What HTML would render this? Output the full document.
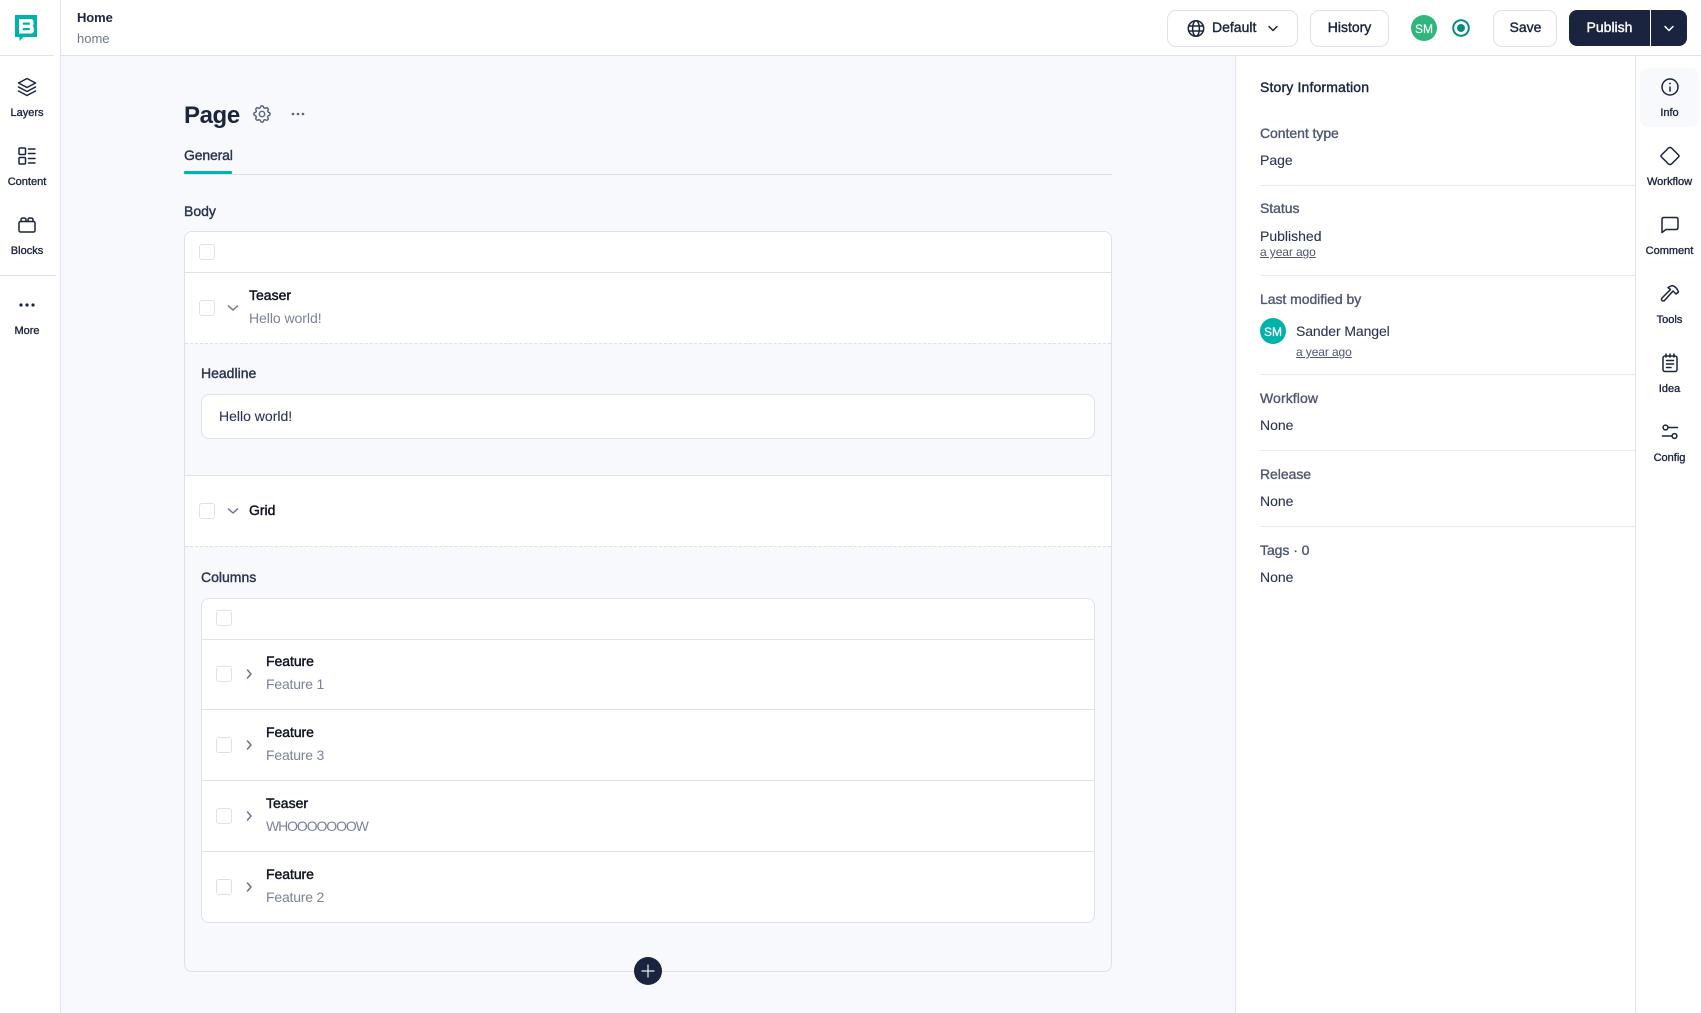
<!DOCTYPE html>
<html lang="en">
<head>
<meta charset="utf-8">
<title>Page</title>
<style>
html,body{margin:0;padding:0;width:1701px;height:1013px;overflow:hidden;background:#fff;font-family:"Liberation Sans",Arial,sans-serif;color:#1b243f}
.a{position:absolute;box-sizing:border-box}
.t{position:absolute;line-height:20px;white-space:nowrap;font-size:14px}
.m{-webkit-text-stroke:.4px currentColor}
.c{transform:translateX(-50%)}
.rl{font-size:11px;color:#1b243f;-webkit-text-stroke:.35px currentColor}
.lab{color:#4f5672;-webkit-text-stroke:.35px currentColor;letter-spacing:-.05px}
.val{color:#2b3350;-webkit-text-stroke:.1px currentColor}
.sub{color:#7c829c;letter-spacing:-.05px}
.nm{color:#0c1020;-webkit-text-stroke:.4px currentColor}
.small{font-size:12px;color:#4f5672;text-decoration:underline;letter-spacing:-.1px}
.cb{position:absolute;width:16px;height:16px;border:1px solid #dfe1ea;border-radius:3px;background:#fff;box-sizing:border-box}
.hl{position:absolute;height:1px;background:#dfe1ea}
.btn{position:absolute;top:10px;height:37px;border:1px solid #dfe1ea;border-radius:9px;background:#fff;box-sizing:border-box}
svg{position:absolute;left:0;top:0}
</style>
</head>
<body>
<!-- frames -->
<div class="a" style="left:60px;top:55px;width:1176px;height:958px;background:#f8f9fd"></div>
<div class="a" style="left:60px;top:0;width:1px;height:1013px;background:#dfe3ee"></div>
<div class="a" style="left:0;top:55px;width:54px;height:1px;background:#dfe1ea"></div>
<div class="a" style="left:60px;top:55px;width:1641px;height:1px;background:#dfe1ea"></div>
<div class="a" style="left:0;top:275px;width:56px;height:1px;background:#dfe1ea"></div>
<div class="a" style="left:1235px;top:56px;width:1px;height:957px;background:#dfe3ee"></div>
<div class="a" style="left:1635px;top:56px;width:1px;height:957px;background:#dfe3ee"></div>
<div class="a" style="left:1640px;top:68px;width:59px;height:59px;background:#f8f9fd;border-radius:8px"></div>

<!-- top bar text -->
<div class="t" style="left:77px;top:8px;font-size:13px;font-weight:bold;color:#1b243f;letter-spacing:-.1px">Home</div>
<div class="t" style="left:77px;top:28.5px;font-size:13px;color:#6f7590">home</div>

<!-- top buttons -->
<div class="btn" style="left:1167px;width:131px"></div>
<div class="t m" style="left:1212px;top:17px;color:#1b243f">Default</div>
<div class="btn" style="left:1310px;width:79px"></div>
<div class="t m c" style="left:1349.5px;top:17px;color:#1b243f">History</div>
<div class="a" style="left:1411px;top:15px;width:26px;height:26px;border-radius:50%;background:#2fb67c"></div>
<div class="t c" style="left:1424px;top:19px;font-size:12px;color:#fff;-webkit-text-stroke:.15px #fff">SM</div>
<div class="btn" style="left:1493px;width:64px"></div>
<div class="t m c" style="left:1525.5px;top:17px;color:#1b243f">Save</div>
<div class="a" style="left:1569px;top:10px;width:118px;height:36px;border-radius:8px;background:#1b243f"></div>
<div class="a" style="left:1650px;top:10px;width:1px;height:36px;background:#fff"></div>
<div class="t m c" style="left:1609.5px;top:17px;color:#fff">Publish</div>

<!-- left rail labels -->
<div class="t rl c" style="left:27px;top:102.5px">Layers</div>
<div class="t rl c" style="left:27px;top:171.5px">Content</div>
<div class="t rl c" style="left:27px;top:240.5px">Blocks</div>
<div class="t rl c" style="left:27px;top:320.5px">More</div>

<!-- right rail labels -->
<div class="t rl c" style="left:1669.5px;top:102.5px">Info</div>
<div class="t rl c" style="left:1669.5px;top:171.5px">Workflow</div>
<div class="t rl c" style="left:1669.5px;top:240.5px">Comment</div>
<div class="t rl c" style="left:1669.5px;top:309.5px">Tools</div>
<div class="t rl c" style="left:1669.5px;top:378.5px">Idea</div>
<div class="t rl c" style="left:1669.5px;top:447.5px">Config</div>

<!-- heading -->
<div class="t" style="left:184px;top:106px;font-size:24px;font-weight:bold;color:#1b243f;letter-spacing:-.4px">Page</div>
<div class="t m" style="left:184px;top:145px;color:#2b3350;letter-spacing:-.15px">General</div>
<div class="hl" style="left:184px;top:174px;width:928px"></div>
<div class="a" style="left:184px;top:171px;width:48px;height:3px;background:#00b3b0;border-radius:1px"></div>
<div class="t m" style="left:184px;top:201px;color:#2b3350">Body</div>

<!-- outer box -->
<div class="a" style="left:184px;top:231px;width:928px;height:741px;border:1px solid #dfe1ea;border-radius:8px;background:#f8f9fd"></div>
<div class="a" style="left:185px;top:232px;width:926px;height:111px;background:#fff;border-radius:7px 7px 0 0"></div>
<div class="a" style="left:185px;top:476px;width:926px;height:70px;background:#fff"></div>
<div class="hl" style="left:185px;top:272px;width:926px"></div>
<div class="a" style="left:185px;top:343px;width:926px;height:0;border-top:1px dashed #dfe1ea"></div>
<div class="hl" style="left:185px;top:475px;width:926px"></div>
<div class="a" style="left:185px;top:546px;width:926px;height:0;border-top:1px dashed #dfe1ea"></div>

<div class="cb" style="left:199px;top:244px"></div>
<div class="cb" style="left:199px;top:300px"></div>
<div class="t nm" style="left:249px;top:285px">Teaser</div>
<div class="t sub" style="left:249px;top:308px">Hello world!</div>

<div class="t m" style="left:201px;top:363px;color:#2b3350">Headline</div>
<div class="a" style="left:201px;top:394px;width:894px;height:45px;border:1px solid #dfe1ea;border-radius:8px;background:#fff"></div>
<div class="t" style="left:219px;top:405.5px;color:#2b3350;-webkit-text-stroke:.1px currentColor">Hello world!</div>

<div class="cb" style="left:199px;top:503px"></div>
<div class="t nm" style="left:249px;top:500px">Grid</div>

<div class="t m" style="left:201px;top:567px;color:#2b3350">Columns</div>

<!-- inner box -->
<div class="a" style="left:201px;top:598px;width:894px;height:325px;border:1px solid #dfe1ea;border-radius:8px;background:#fff"></div>
<div class="hl" style="left:202px;top:639px;width:892px"></div>
<div class="hl" style="left:202px;top:709px;width:892px"></div>
<div class="hl" style="left:202px;top:780px;width:892px"></div>
<div class="hl" style="left:202px;top:851px;width:892px"></div>
<div class="cb" style="left:216px;top:610px"></div>
<div class="cb" style="left:216px;top:666px"></div>
<div class="cb" style="left:216px;top:737px"></div>
<div class="cb" style="left:216px;top:808px"></div>
<div class="cb" style="left:216px;top:879px"></div>
<div class="t nm" style="left:266px;top:651px;letter-spacing:-.05px">Feature</div>
<div class="t sub" style="left:266px;top:674px;letter-spacing:-.2px">Feature 1</div>
<div class="t nm" style="left:266px;top:722px;letter-spacing:-.05px">Feature</div>
<div class="t sub" style="left:266px;top:745px;letter-spacing:-.2px">Feature 3</div>
<div class="t nm" style="left:266px;top:793px">Teaser</div>
<div class="t sub" style="left:266px;top:816px;letter-spacing:-1.1px">WHOOOOOOOW</div>
<div class="t nm" style="left:266px;top:864px;letter-spacing:-.05px">Feature</div>
<div class="t sub" style="left:266px;top:887px;letter-spacing:-.2px">Feature 2</div>

<!-- right panel -->
<div class="t m" style="left:1260px;top:77px;color:#1b243f;letter-spacing:.15px">Story Information</div>
<div class="t lab" style="left:1260px;top:123px">Content type</div>
<div class="t val" style="left:1260px;top:150px">Page</div>
<div class="hl" style="left:1260px;top:185px;width:375px;background:#e9eaf0"></div>
<div class="t lab" style="left:1260px;top:198px">Status</div>
<div class="t val" style="left:1260px;top:225.5px">Published</div>
<div class="t small" style="left:1260px;top:242px">a year ago</div>
<div class="hl" style="left:1260px;top:275px;width:375px;background:#e9eaf0"></div>
<div class="t lab" style="left:1260px;top:289px">Last modified by</div>
<div class="a" style="left:1260px;top:318px;width:26px;height:26px;border-radius:50%;background:#00b3aa"></div>
<div class="t c" style="left:1273px;top:321.5px;font-size:12px;color:#fff;-webkit-text-stroke:.25px #fff">SM</div>
<div class="t val" style="left:1296px;top:321px;letter-spacing:-.1px">Sander Mangel</div>
<div class="t small" style="left:1296px;top:342px">a year ago</div>
<div class="hl" style="left:1260px;top:374px;width:375px;background:#e9eaf0"></div>
<div class="t lab" style="left:1260px;top:388px;letter-spacing:.1px">Workflow</div>
<div class="t val" style="left:1260px;top:415px">None</div>
<div class="hl" style="left:1260px;top:450px;width:375px;background:#e9eaf0"></div>
<div class="t lab" style="left:1260px;top:464px">Release</div>
<div class="t val" style="left:1260px;top:491px">None</div>
<div class="hl" style="left:1260px;top:526px;width:375px;background:#e9eaf0"></div>
<div class="t lab" style="left:1260px;top:540px">Tags · 0</div>
<div class="t val" style="left:1260px;top:567px">None</div>

<!-- icons -->
<svg width="1701" height="1013" viewBox="0 0 1701 1013" fill="none" stroke="#1b243f" stroke-width="1.5" stroke-linecap="round" stroke-linejoin="round">
  <!-- logo -->
  <path d="M15 15H37V37H23.5L19.5 41V37H15Z" fill="#00b3aa" stroke="none"/>
  <path d="M19 19H30.5Q33.5 19 33.5 22V24.5Q33.5 25.8 32.5 26.2Q33.8 26.8 33.8 28V30.5Q33.8 33.5 30.8 33.5H19ZM22.8 22.5V24.8H29.8V22.5ZM22.8 28V30.2H29.8V28Z" fill="#fff" stroke="none" fill-rule="evenodd"/>

  <!-- left rail -->
  <path d="M27 78.5L35.5 83 27 87.5 18.5 83Z"/>
  <path d="M18.5 87L27 91.5 35.5 87"/>
  <path d="M18.5 91L27 95.5 35.5 91"/>
  <rect x="19" y="148" width="6.5" height="6.5" rx="1"/>
  <rect x="19" y="157.5" width="6.5" height="6.5" rx="1"/>
  <path d="M28.5 149H35M28.5 153.5H35M28.5 158.5H35M28.5 163H35"/>
  <rect x="19" y="221.5" width="16" height="10.5" rx="1.5"/>
  <path d="M21 221.5V220Q21 218 23 218H24Q26 218 26 220V221.5M28 221.5V220Q28 218 30 218H31Q33 218 33 220V221.5"/>
  <g fill="#1b243f" stroke="none"><circle cx="21" cy="305" r="1.6"/><circle cx="27" cy="305" r="1.6"/><circle cx="33" cy="305" r="1.6"/></g>

  <!-- gear -->
  <g transform="translate(251.2 103.2) scale(.9)" stroke="#5b6180" stroke-width="1.6">
    <path d="M10.325 4.317c.426-1.756 2.924-1.756 3.35 0a1.724 1.724 0 0 0 2.573 1.066c1.543-.94 3.31.826 2.37 2.37a1.724 1.724 0 0 0 1.065 2.572c1.756.426 1.756 2.924 0 3.35a1.724 1.724 0 0 0-1.066 2.573c.94 1.543-.826 3.31-2.37 2.37a1.724 1.724 0 0 0-2.572 1.065c-.426 1.756-2.924 1.756-3.35 0a1.724 1.724 0 0 0-2.573-1.066c-1.543.94-3.31-.826-2.37-2.37a1.724 1.724 0 0 0-1.065-2.572c-1.756-.426-1.756-2.924 0-3.35a1.724 1.724 0 0 0 1.066-2.573c-.94-1.543.826-3.31 2.37-2.37c1 .608 2.296.07 2.572-1.065z"/>
    <circle cx="12" cy="12" r="3"/>
  </g>
  <g fill="#5b6180" stroke="none"><circle cx="293" cy="114" r="1.3"/><circle cx="298" cy="114" r="1.3"/><circle cx="303" cy="114" r="1.3"/></g>

  <!-- globe -->
  <circle cx="1196" cy="28.5" r="7.7"/>
  <ellipse cx="1196" cy="28.5" rx="3.4" ry="7.7"/>
  <path d="M1188.8 26H1203.2M1188.8 31H1203.2"/>
  <path d="M1269 26.5L1273 30.5 1277 26.5"/>
  <circle cx="1461" cy="28" r="7.8" stroke="#0a8a80" stroke-width="2"/>
  <circle cx="1461" cy="28" r="4" fill="#0a8a80" stroke="none"/>
  <path d="M1665 26.5L1669 30.5 1673 26.5" stroke="#fff"/>

  <!-- right rail -->
  <circle cx="1670" cy="87" r="8"/>
  <path d="M1670 87V91"/>
  <circle cx="1670" cy="83.5" r=".9" fill="#1b243f" stroke="none"/>
  <path d="M1668.5 148L1661.5 155Q1660.5 156 1661.5 157L1668.5 164Q1670 165 1671.5 164L1678.5 157Q1679.5 156 1678.5 155L1671.5 148Q1670 147 1668.5 148Z"/>
  <path d="M1664 217.5H1676Q1678 217.5 1678 219.5V227.5Q1678 229.5 1676 229.5H1666L1662 232.5V219.5Q1662 217.5 1664 217.5Z"/>
  <path d="M1668 287.5L1672 285.5Q1676.5 286.5 1678.5 292L1676 294 1673 291 1664.5 300.5Q1663 301.5 1662 300.5 1661 299.5 1662 298L1670.5 289.5Z"/>
  <rect x="1663" y="356" width="14" height="15.5" rx="2"/>
  <path d="M1666 354V357M1670 354V357M1674 354V357M1666.5 360.5H1673.5M1666.5 364H1673.5M1666.5 367.5H1671"/>
  <circle cx="1665.5" cy="427.5" r="2.4"/>
  <circle cx="1674.5" cy="436" r="2.4"/>
  <path d="M1668 427.5H1677.5M1662.5 436H1672"/>

  <!-- chevrons -->
  <g stroke="#6b7190">
    <path d="M228.5 306L233 310 237.5 306"/>
    <path d="M228.5 509L233 513 237.5 509"/>
    <path d="M247.5 670L251 674 247.5 678"/>
    <path d="M247.5 741L251 745 247.5 749"/>
    <path d="M247.5 812L251 816 247.5 820"/>
    <path d="M247.5 883L251 887 247.5 891"/>
  </g>

  <!-- add -->
  <circle cx="648" cy="971" r="14" fill="#1b243f" stroke="none"/>
  <path d="M648 965V977M642 971H654" stroke="#e8eaf2" stroke-width="1.2"/>
</svg>
</body>
</html>
